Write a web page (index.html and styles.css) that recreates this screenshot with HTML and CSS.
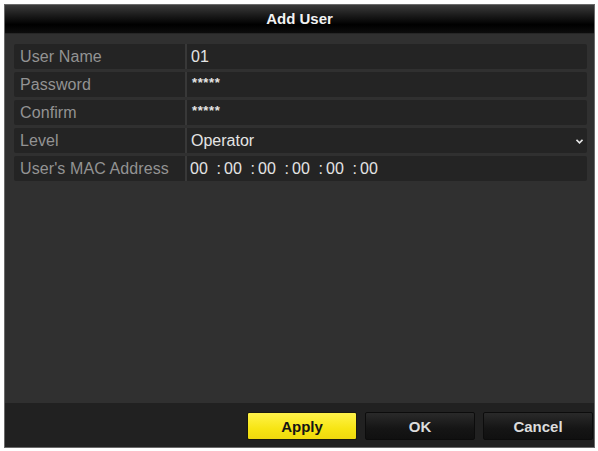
FILE: index.html
```html
<!DOCTYPE html>
<html lang="en">
<head>
    <meta charset="UTF-8">
    <meta name="viewport" content="width=device-width, initial-scale=1.0">
    <title>Add User</title>
    <link rel="stylesheet" href="styles.css">
</head>
<body>
    <div class="dialog">
        <div class="title">Add User</div>
        <div class="content">
            <div class="form">
                <div class="row">
                    <div class="label">User Name</div>
                    <div class="value">01</div>
                </div>
                <div class="row">
                    <div class="label">Password</div>
                    <div class="value stars">*****</div>
                </div>
                <div class="row">
                    <div class="label">Confirm</div>
                    <div class="value stars">*****</div>
                </div>
                <div class="row">
                    <div class="label">Level</div>
                    <div class="value select">
                        <span>Operator</span>
                        <svg class="arrow" width="7" height="5" viewBox="0 0 7 5"><path d="M0.5 0.8 L3.5 3.8 L6.5 0.8" fill="none" stroke="#e6e6e6" stroke-width="1.6"/></svg>
                    </div>
                </div>
                <div class="row">
                    <div class="label">User's MAC Address</div>
                    <div class="value mac">
                        <span class="octet">00</span><span class="colon">:</span>
                        <span class="octet">00</span><span class="colon">:</span>
                        <span class="octet">00</span><span class="colon">:</span>
                        <span class="octet">00</span><span class="colon">:</span>
                        <span class="octet">00</span><span class="colon">:</span>
                        <span class="octet">00</span>
                    </div>
                </div>
            </div>
        </div>
        <div class="footer">
            <button class="btn apply">Apply</button>
            <button class="btn">OK</button>
            <button class="btn">Cancel</button>
        </div>
    </div>
</body>
</html>
```

FILE: styles.css
```css
* {
    margin: 0;
    padding: 0;
    box-sizing: border-box;
    font-family: 'Liberation Sans', Arial, sans-serif;
}

body {
    background: #ffffff;
    padding: 4px 0 0 4px;
}

.dialog {
    width: 591px;
    height: 444px;
    display: flex;
    flex-direction: column;
    background: #303030;
    border: 1px solid #6a6a6a;
}

.title {
    height: 29px;
    line-height: 27px;
    text-align: center;
    color: #f2f2f2;
    font-size: 15px;
    font-weight: bold;
    background: linear-gradient(to bottom, #3a3a3a 0%, #1c1c1c 35%, #000000 70%, #0c0c0c 100%);
    border-bottom: 1px solid #262626;
}

.content {
    flex: 1;
    padding: 10px 7px 0 9px;
}

.form {
    display: grid;
    gap: 3px;
}

.row {
    display: grid;
    grid-template-columns: 173px 1fr;
    height: 25px;
    background: #242424;
    border-radius: 2px;
}

.label {
    color: #939393;
    font-size: 16px;
    line-height: 25px;
    padding-left: 6px;
    letter-spacing: 0.1px;
    border-right: 2px solid #383838;
    white-space: nowrap;
}

.value {
    color: #e4e4e4;
    font-size: 16px;
    line-height: 25px;
    padding-left: 4px;
}

.stars {
    font-size: 13px;
    font-weight: bold;
    letter-spacing: 0.6px;
    line-height: 22px;
    padding-left: 5px;
}

.select {
    display: flex;
    justify-content: space-between;
    align-items: center;
    padding-right: 4px;
}

.arrow {
    margin-top: 2px;
}

.mac {
    display: flex;
    padding-left: 3px;
}

.octet {
    width: 18px;
}

.colon {
    width: 16px;
    text-align: right;
    padding-right: 3px;
}

.footer {
    height: 44px;
    background: #212121;
    display: flex;
    justify-content: flex-end;
    gap: 8px;
    padding: 9px 1px 0 0;
}

.btn {
    width: 110px;
    height: 28px;
    border: 1px solid #0c0c0c;
    border-radius: 2px;
    background: linear-gradient(to bottom, #2a2a2a 0%, #151515 60%, #101010 100%);
    color: #dcdcdc;
    font-size: 15px;
    font-weight: bold;
}

.btn.apply {
    background: linear-gradient(to bottom, #fff34a 0%, #f7e514 60%, #efd90e 100%);
    color: #151515;
    border-color: #1a1a10;
}
```
